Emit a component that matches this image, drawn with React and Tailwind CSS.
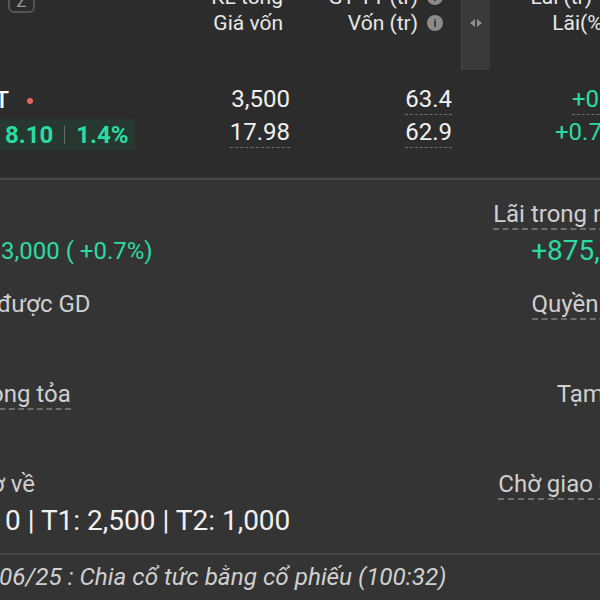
import React from "react";

function InfoIcon() {
  return (
    <span className="inline-flex w-[16px] h-[16px] rounded-full bg-[#8a8a8a] items-center justify-center text-[#2c2c2c] text-[11px] font-bold leading-none">i</span>
  );
}

function Dashed({ children, show = true, className = "" }) {
  return (
    <span className={`inline-block border-b border-dashed pb-[2px] ${show ? "border-[#6e6e6e]" : "border-transparent"} ${className}`}>
      {children}
    </span>
  );
}

export default function App() {
  return (
    <div className="w-[600px] h-[600px] overflow-hidden bg-[#343434] font-['Roboto','Noto_Sans',sans-serif]">
      <div className="w-[644px]">
        {/* Header */}
        <div className="h-[72px] bg-[#2c2c2c] flex">
          <div className="w-[200px] pl-[8px]">
            <div className="-mt-[12px] w-[27px] h-[25px] border-2 border-[#555] rounded-[6px] flex items-end justify-center text-[#9a9a9a] text-[17px] leading-[20px]">Z</div>
          </div>
          <div className="w-[92px] pr-[9px] -mt-[16px] text-right text-[21px] leading-[26px] text-[#e8e8e8]">
            <div>KL tổng</div>
            <div>Giá vốn</div>
          </div>
          <div className="w-[162px] pr-[11px] -mt-[16px] flex flex-col items-end text-[21px] leading-[26px] text-[#e8e8e8]">
            <div className="flex items-center gap-[9px]">GT TT (tr) <InfoIcon /></div>
            <div className="flex items-center gap-[9px]">Vốn (tr) <InfoIcon /></div>
          </div>
          <div className="w-[7px]" />
          <div className="w-[29px] h-[70px] bg-[#3a3a3a] border-l border-[#444] flex justify-center pt-[18px]">
            <svg width="14" height="10" viewBox="0 0 14 10">
              <path d="M6 1 L1 5 L6 9 Z" fill="#8f8f8f" />
              <path d="M8 1 L13 5 L8 9 Z" fill="#8f8f8f" />
            </svg>
          </div>
          <div className="flex-1 pr-[34px] -mt-[16px] flex flex-col items-end text-[21px] leading-[26px] text-[#e8e8e8]">
            <div className="flex items-center gap-[8px] mr-[-6px]">Lãi (tr) <InfoIcon /></div>
            <div>Lãi(%)</div>
          </div>
        </div>

        {/* Row */}
        <div className="h-[105px] bg-[#2c2c2c] flex pt-[14px]">
          <div className="w-[200px] flex flex-col">
            <div className="h-[30px] flex items-center">
              <span className="text-[23px] font-medium text-white leading-[26px] -ml-[5px]">T</span>
              <span className="ml-[18px] w-[6px] h-[6px] rounded-full bg-[#e8685a]" />
            </div>
            <div className="mt-[3px] w-[135px] h-[31px] bg-[#26382f] flex items-center pl-[5px] text-[24px] font-bold text-[#2bdca2] leading-none">
              <span>8.10</span>
              <span className="ml-[11px] mr-[11px] w-px h-[18px] bg-[#6d6d6d]" />
              <span>1.4%</span>
            </div>
          </div>
          <div className="w-[92px] pr-[2px] flex flex-col items-end text-[24px] leading-[26px] text-[#f0f0f0] gap-[4px]">
            <Dashed show={false}>3,500</Dashed>
            <Dashed>17.98</Dashed>
          </div>
          <div className="w-[162px] pr-[2px] flex flex-col items-end text-[24px] leading-[26px] text-[#f0f0f0] gap-[4px]">
            <Dashed>63.4</Dashed>
            <Dashed>62.9</Dashed>
          </div>
          <div className="w-[36px]" />
          <div className="flex-1 pl-[46px] flex flex-col items-start text-[24px] leading-[26px] text-[#2bdca2] gap-[4px]">
            <Dashed className="ml-[36px]">+0.4</Dashed>
            <Dashed show={false} className="ml-[19px]">+0.7%</Dashed>
          </div>
        </div>

        {/* Divider */}
        <div className="h-[2px] bg-[#484848] mt-[1px]" />

        {/* Detail blocks */}
        <div className="pt-[20px] flex flex-col gap-[23px] text-[24px]">
          <div className="flex justify-between">
            <div className="flex flex-col items-start">
              <div className="h-[30px]" />
              <div className="mt-[5px] leading-[32px] text-[24px] text-[#2bdca2] ml-[1px]">3,000 ( +0.7%)</div>
            </div>
            <div className="flex flex-col items-end">
              <Dashed className="leading-[28px] text-[#cfcfcf] !pb-0 border-b-2">Lãi trong ngày</Dashed>
              <div className="mt-[5px] leading-[32px] text-[28px] text-[#2bdca2] -mr-[3px]">+875,000</div>
            </div>
          </div>

          <div className="flex justify-between">
            <div className="flex flex-col items-start">
              <div className="h-[30px] leading-[28px] text-[#cfcfcf] -ml-[3px]">được GD</div>
              <div className="mt-[5px] h-[32px]" />
            </div>
            <div className="flex flex-col items-end">
              <Dashed className="leading-[28px] text-[#cfcfcf] !pb-0 border-b-2">Quyền chờ</Dashed>
              <div className="mt-[5px] h-[32px]" />
            </div>
          </div>

          <div className="flex justify-between">
            <div className="flex flex-col items-start">
              <Dashed className="leading-[28px] text-[#cfcfcf] !pb-0 border-b-2 -ml-[10px]">ong tỏa</Dashed>
              <div className="mt-[5px] h-[32px]" />
            </div>
            <div className="flex flex-col items-end">
              <div className="h-[30px] leading-[28px] text-[#cfcfcf]">Tạm giữ</div>
              <div className="mt-[5px] h-[32px]" />
            </div>
          </div>

          <div className="flex justify-between">
            <div className="flex flex-col items-start">
              <div className="h-[30px] leading-[28px] text-[#cfcfcf] -ml-[9px]">ờ về</div>
              <div className="mt-[5px] leading-[32px] text-[28px] text-[#f0f0f0] ml-[5px]">0 | T1: 2,500 | T2: 1,000</div>
            </div>
            <div className="flex flex-col items-end">
              <Dashed className="leading-[28px] text-[#cfcfcf] !pb-0 border-b-2">Chờ giao dịch</Dashed>
              <div className="mt-[5px] h-[32px]" />
            </div>
          </div>
        </div>

        <div className="h-[2px] bg-[#444] mt-[16px]" />
        <div className="pt-[8px] leading-[28px] text-[24.3px] italic text-[#d0d0d0] -ml-[1px]">06/25 : Chia cổ tức bằng cổ phiếu (100:32)</div>
      </div>
    </div>
  );
}
